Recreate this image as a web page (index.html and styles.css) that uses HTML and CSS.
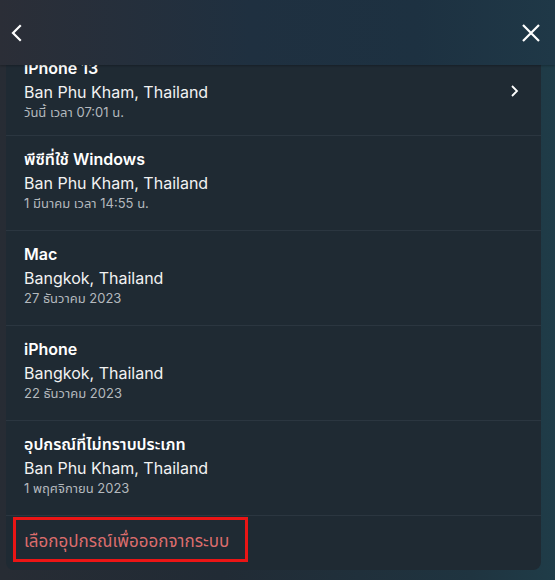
FILE: index.html
```html
<!DOCTYPE html>
<html lang="th">
<head>
<meta charset="utf-8">
<link rel="stylesheet" href="styles.css">
</head>
<body>
<div class="screen">
  <header class="header">
    <button class="icon-btn" aria-label="ย้อนกลับ">
      <svg width="14" height="18" viewBox="0 0 14 18"><path d="M11 2 L4 9 L11 16" fill="none" stroke="#fff" stroke-width="2.2" stroke-linecap="square"/></svg>
    </button>
    <button class="icon-btn" aria-label="ปิด">
      <svg width="20" height="20" viewBox="0 0 20 20"><path d="M2 2 L18 18 M18 2 L2 18" fill="none" stroke="#fff" stroke-width="2.2"/></svg>
    </button>
  </header>
  <main class="panel">
    <ul class="list">
      <li class="item first">
        <div class="info">
          <div class="title">iPhone 13</div>
          <div class="loc">Ban Phu Kham, Thailand</div>
          <div class="date">วันนี้ เวลา 07:01 น.</div>
        </div>
        <svg class="chev" width="10" height="14" viewBox="0 0 10 14"><path d="M3 2 L8 7 L3 12" fill="none" stroke="#fff" stroke-width="1.8"/></svg>
      </li>
      <li class="item">
        <div class="info">
          <div class="title">พีซีที่ใช้ Windows</div>
          <div class="loc">Ban Phu Kham, Thailand</div>
          <div class="date">1 มีนาคม เวลา 14:55 น.</div>
        </div>
      </li>
      <li class="item">
        <div class="info">
          <div class="title">Mac</div>
          <div class="loc">Bangkok, Thailand</div>
          <div class="date">27 ธันวาคม 2023</div>
        </div>
      </li>
      <li class="item">
        <div class="info">
          <div class="title">iPhone</div>
          <div class="loc">Bangkok, Thailand</div>
          <div class="date">22 ธันวาคม 2023</div>
        </div>
      </li>
      <li class="item">
        <div class="info">
          <div class="title">อุปกรณ์ที่ไม่ทราบประเภท</div>
          <div class="loc">Ban Phu Kham, Thailand</div>
          <div class="date">1 พฤศจิกายน 2023</div>
        </div>
      </li>
    </ul>
    <div class="footer">
      <a class="signout" href="#">เลือกอุปกรณ์เพื่อออกจากระบบ</a>
    </div>
  </main>
</div>
</body>
</html>
```

FILE: styles.css
```css
* { box-sizing: border-box; }
html, body { margin: 0; padding: 0; }
body {
  width: 555px;
  height: 580px;
  overflow: hidden;
  background: linear-gradient(90deg, #272c34 0%, #212b35 40%, #1f3440 85%, #1f3c48 100%);
  font-family: Inter, "Noto Sans Thai", "Noto Sans", sans-serif;
  color: #fff;
}
.screen {
  height: 580px;
  display: flex;
  flex-direction: column;
}
.header {
  height: 65px;
  flex: none;
  display: flex;
  align-items: center;
  justify-content: space-between;
  padding: 0 14px 0 9px;
  background: linear-gradient(90deg, #2b2e37 0%, #1f3040 45%, #1d3141 75%, #1f3847 100%);
  position: relative;
  z-index: 2;
  box-shadow: 0 1px 2px rgba(0,0,0,0.25);
}
.icon-btn {
  background: none;
  border: 0;
  padding: 0;
  display: flex;
  cursor: pointer;
}
.panel {
  margin: 0 14px 0 6px;
  height: 505px;
  flex: none;
  background: #1f2a33;
  border-radius: 0 0 8px 8px;
  overflow: hidden;
}
.list {
  list-style: none;
  margin: -25px 0 0 0;
  padding: 0;
}
.item {
  display: flex;
  align-items: center;
  height: 95px;
  padding: 11px 22px 18px 18px;
  border-top: 1px solid #2b3640;
}
.item.first {
  padding-top: 15px;
  padding-bottom: 14px;
}
.info { flex: 1; }
.title {
  font-size: 16px;
  font-weight: 600;
  line-height: 24px;
  color: #fff;
}
.loc {
  font-size: 16px;
  line-height: 24px;
  color: #f2f2f2;
}
.date {
  font-size: 13px;
  line-height: 17px;
  color: #b4b9be;
}
.chev { margin-top: 4px; }
.footer {
  border-top: 1px solid #2b3640;
  padding: 1px 7px;
}
.signout {
  display: inline-block;
  width: 235px;
  height: 45px;
  border: 3px solid #ea1515;
  padding: 9px 0 0 8px;
  font-size: 17px;
  line-height: 25px;
  color: #dc6d6d;
  text-decoration: none;
}
```
